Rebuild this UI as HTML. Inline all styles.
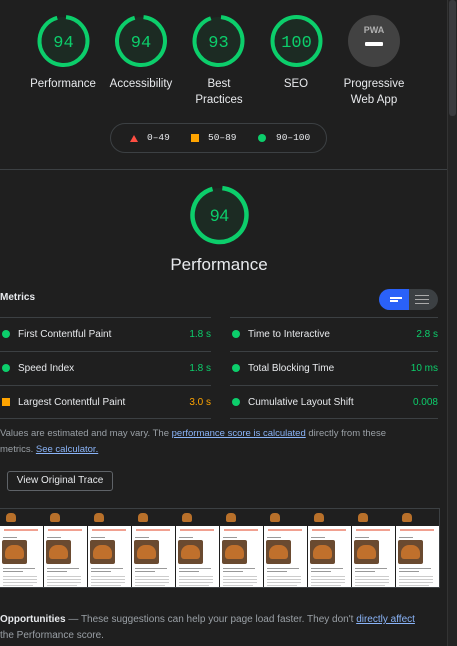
<!DOCTYPE html>
<html><head><meta charset="utf-8"><style>
*{box-sizing:border-box;margin:0;padding:0}
body{width:457px;height:646px;overflow:hidden;background:#1f1f1f;font-family:"Liberation Sans",sans-serif;color:#e8eaed;position:relative}
.abs{position:absolute}
.lbl{position:absolute;width:90px;text-align:center;font-size:11.5px;line-height:16px;color:#e8eaed}
.gnum{font-family:"Liberation Mono",monospace;fill:#0cce6b;text-anchor:middle}
.sb{position:absolute;left:447px;top:0;width:10px;height:646px;background:#242424;border-left:1px solid #333}
.thumb{position:absolute;left:449px;top:0;width:7px;height:116px;background:#3a3b3e;border-radius:3px}
.leg{position:absolute;left:110px;top:123px;width:217px;height:30px;border:1px solid #3c4043;border-radius:15px;font-family:"Liberation Mono",monospace;font-size:9.5px;color:#e8eaed}
.row{position:absolute;height:34px;border-top:1px solid #3c4043;font-size:10px}
.row .d{position:absolute;left:2px;top:12px;width:8px;height:8px;border-radius:50%;background:#0cce6b}
.row .t{position:absolute;left:18px;top:11px}
.row .v{position:absolute;right:0;top:11px;color:#0cce6b}
a{color:#8ab4f8;text-decoration:underline}
.fr{position:absolute;top:509px;width:43px;height:78px;background:#fff}
.fr .h{height:17px;background:#1f1f1f}
.fr .h i{position:absolute;left:6px;top:4px;width:10px;height:9px;background:#b8702a;border-radius:4px 4px 2px 2px}
.fr .r{position:absolute;left:4px;top:20px;width:34px;height:2px;background:#f0a090}
.fr .im{position:absolute;left:2px;top:31px;width:25px;height:24px;background:#6a4a30;border-radius:2px}
.fr .im b{position:absolute;left:3px;top:5px;width:19px;height:14px;background:#c0702c;border-radius:8px 8px 3px 3px}
.fr .l{position:absolute;left:3px;height:1px;background:#999}
</style></head><body>
<svg class="abs" style="left:0;top:0" width="447" height="170">
<g>
<circle cx="63.5" cy="41" r="24" fill="#1c2b23" stroke="#0cce6b" stroke-width="4" stroke-dasharray="141.7 150.8" transform="rotate(-84 63.5 41)"/>
<text x="63.5" y="47" class="gnum" font-size="17">94</text>
<circle cx="141" cy="41" r="24" fill="#1c2b23" stroke="#0cce6b" stroke-width="4" stroke-dasharray="141.7 150.8" transform="rotate(-84 141 41)"/>
<text x="141" y="47" class="gnum" font-size="17">94</text>
<circle cx="218.5" cy="41" r="24" fill="#1c2b23" stroke="#0cce6b" stroke-width="4" stroke-dasharray="140.2 150.8" transform="rotate(-84 218.5 41)"/>
<text x="218.5" y="47" class="gnum" font-size="17">93</text>
<circle cx="296.5" cy="41" r="24" fill="#1c2b23" stroke="#0cce6b" stroke-width="4"/>
<text x="296.5" y="47" class="gnum" font-size="17">100</text>
<circle cx="374" cy="41" r="26" fill="#424242"/>
<text x="374" y="33" font-family="Liberation Sans" font-weight="bold" font-size="9" fill="#b0b0b0" text-anchor="middle">PWA</text>
<rect x="365" y="42" width="18" height="4" rx="1" fill="#fff"/>
</g>
<line x1="0" y1="169.5" x2="447" y2="169.5" stroke="#3c4043"/>
</svg>
<div class="lbl" style="left:18px;top:76px">Performance</div>
<div class="lbl" style="left:96px;top:76px">Accessibility</div>
<div class="lbl" style="left:174px;top:76px">Best<br>Practices</div>
<div class="lbl" style="left:251px;top:76px">SEO</div>
<div class="lbl" style="left:329px;top:76px">Progressive<br>Web App</div>
<div class="leg">
<svg class="abs" style="left:18px;top:10px" width="10" height="10"><polygon points="5,1 9,8 1,8" fill="#ff4e42"/></svg>
<span class="abs" style="left:36px;top:8px">0–49</span>
<div class="abs" style="left:80px;top:10px;width:8px;height:8px;background:#ffa400"></div>
<span class="abs" style="left:97px;top:8px">50–89</span>
<div class="abs" style="left:147px;top:10px;width:8px;height:8px;border-radius:50%;background:#0cce6b"></div>
<span class="abs" style="left:165px;top:8px">90–100</span>
</div>
<svg class="abs" style="left:185px;top:182px" width="70" height="70">
<circle cx="34.5" cy="33" r="27" fill="#1c2b23" stroke="#0cce6b" stroke-width="4.5" stroke-dasharray="159.5 170" transform="rotate(-84 34.5 33)"/>
<text x="34.5" y="39" font-family="Liberation Sans" font-size="17" fill="#0cce6b" text-anchor="middle">94</text>
</svg>
<div class="abs" style="left:119px;top:255px;width:200px;text-align:center;font-size:17px;color:#e8eaed">Performance</div>
<div class="abs" style="left:0;top:292px;font-size:10px;font-weight:bold">Metrics</div>
<div class="abs" style="left:379px;top:289px;width:59px;height:21px;border-radius:11px;background:#3c4043;overflow:hidden">
<div class="abs" style="left:0;top:0;width:30px;height:21px;background:#2a61f8"></div>
<div class="abs" style="left:11px;top:8px;width:12px;height:2px;background:#fff"></div>
<div class="abs" style="left:11px;top:11px;width:8px;height:2px;background:#fff"></div>
<div class="abs" style="left:36px;top:6px;width:14px;height:1px;background:#aaa"></div>
<div class="abs" style="left:36px;top:10px;width:14px;height:1px;background:#aaa"></div>
<div class="abs" style="left:36px;top:14px;width:14px;height:1px;background:#aaa"></div>
</div>
<div class="row" style="left:0;top:317px;width:211px"><i class="d"></i><span class="t">First Contentful Paint</span><span class="v">1.8 s</span></div>
<div class="row" style="left:0;top:351px;width:211px"><i class="d"></i><span class="t">Speed Index</span><span class="v">1.8 s</span></div>
<div class="row" style="left:0;top:385px;width:211px;border-bottom:1px solid #3c4043"><i class="d" style="border-radius:0;background:#ffa400"></i><span class="t">Largest Contentful Paint</span><span class="v" style="color:#ffa400">3.0 s</span></div>
<div class="row" style="left:230px;top:317px;width:208px"><i class="d"></i><span class="t">Time to Interactive</span><span class="v">2.8 s</span></div>
<div class="row" style="left:230px;top:351px;width:208px"><i class="d"></i><span class="t">Total Blocking Time</span><span class="v">10 ms</span></div>
<div class="row" style="left:230px;top:385px;width:208px;border-bottom:1px solid #3c4043"><i class="d"></i><span class="t">Cumulative Layout Shift</span><span class="v">0.008</span></div>
<div class="abs" style="left:0;top:426px;width:420px;font-size:9.5px;line-height:16px;color:#9aa0a6">Values are estimated and may vary. The <a>performance score is calculated</a> directly from these metrics. <a>See calculator.</a></div>
<div class="abs" style="left:7px;top:471px;width:106px;height:20px;border:1px solid #5f6368;border-radius:3px;font-size:10px;text-align:center;line-height:18px;color:#e8eaed">View Original Trace</div>
<div class="abs" style="left:0;top:508px;width:440px;height:80px;background:#1f1f1f;border:1px solid #3c4043"></div>
<div id="fs"></div>
<div class="abs" style="left:0;top:612px;width:420px;font-size:10px;line-height:16px;color:#9aa0a6"><b style="color:#e8eaed">Opportunities</b> — These suggestions can help your page load faster. They don't <a>directly affect</a> the Performance score.</div>
<div class="sb"></div><div class="thumb"></div>
<script>
var s='';for(var i=0;i<10;i++){var x=i*44;s+='<div class="fr" style="left:'+x+'px"><div class="h"><i></i></div><div class="r"></div><div class="l" style="top:28px;width:14px"></div><div class="im"><b></b></div><div class="l" style="top:59px;width:32px"></div><div class="l" style="top:62px;width:20px"></div><div class="l" style="top:67px;width:34px;background:#ccc"></div><div class="l" style="top:70px;width:34px;background:#ccc"></div><div class="l" style="top:73px;width:34px;background:#ccc"></div><div class="l" style="top:76px;width:30px;background:#ccc"></div></div>';}
document.getElementById('fs').innerHTML=s;
</script>
</body></html>
